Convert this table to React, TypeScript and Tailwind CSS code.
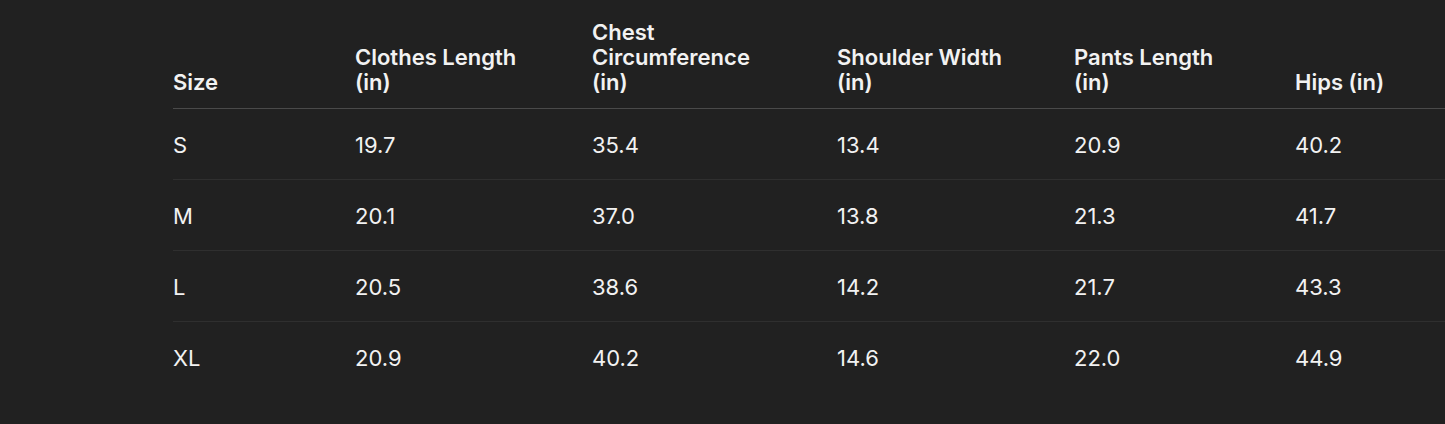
import React from "react";

const headers: string[][] = [
  ["Size"],
  ["Clothes Length", "(in)"],
  ["Chest", "Circumference", "(in)"],
  ["Shoulder Width", "(in)"],
  ["Pants Length", "(in)"],
  ["Hips (in)"],
];

const colWidths = ["w-[182px]", "w-[237px]", "w-[245px]", "w-[237px]", "w-[221px]", "w-[150px]"];

const rows = [
  ["S", "19.7", "35.4", "13.4", "20.9", "40.2"],
  ["M", "20.1", "37.0", "13.8", "21.3", "41.7"],
  ["L", "20.5", "38.6", "14.2", "21.7", "43.3"],
  ["XL", "20.9", "40.2", "14.6", "22.0", "44.9"],
];

export default function App() {
  return (
    <div
      className="w-[1445px] h-[424px] overflow-hidden bg-[#212121] text-[#f2f2f2] pl-[173px] pt-[20px]"
      style={{ fontFamily: "Inter, 'Noto Sans', sans-serif" }}
    >
      <table className="table-fixed border-collapse w-[1272px] text-[22px] leading-[25px]">
        <colgroup>
          {colWidths.map((w, i) => (
            <col key={i} className={w} />
          ))}
        </colgroup>
        <thead>
          <tr className="border-b border-[#4a4a4a]">
            {headers.map((h, i) => (
              <th
                key={i}
                className="text-left align-bottom font-semibold p-0 pb-[13px] whitespace-nowrap"
              >
                {h.map((line, li) => (
                  <div key={li}>{line}</div>
                ))}
              </th>
            ))}
          </tr>
        </thead>
        <tbody>
          {rows.map((r, ri) => (
            <tr
              key={ri}
              className={ri < rows.length - 1 ? "border-b border-[#2f2f2f]" : ""}
            >
              {r.map((c, ci) => (
                <td key={ci} className="h-[71px] p-0 pt-[2px] align-middle font-normal">
                  {c}
                </td>
              ))}
            </tr>
          ))}
        </tbody>
      </table>
    </div>
  );
}
